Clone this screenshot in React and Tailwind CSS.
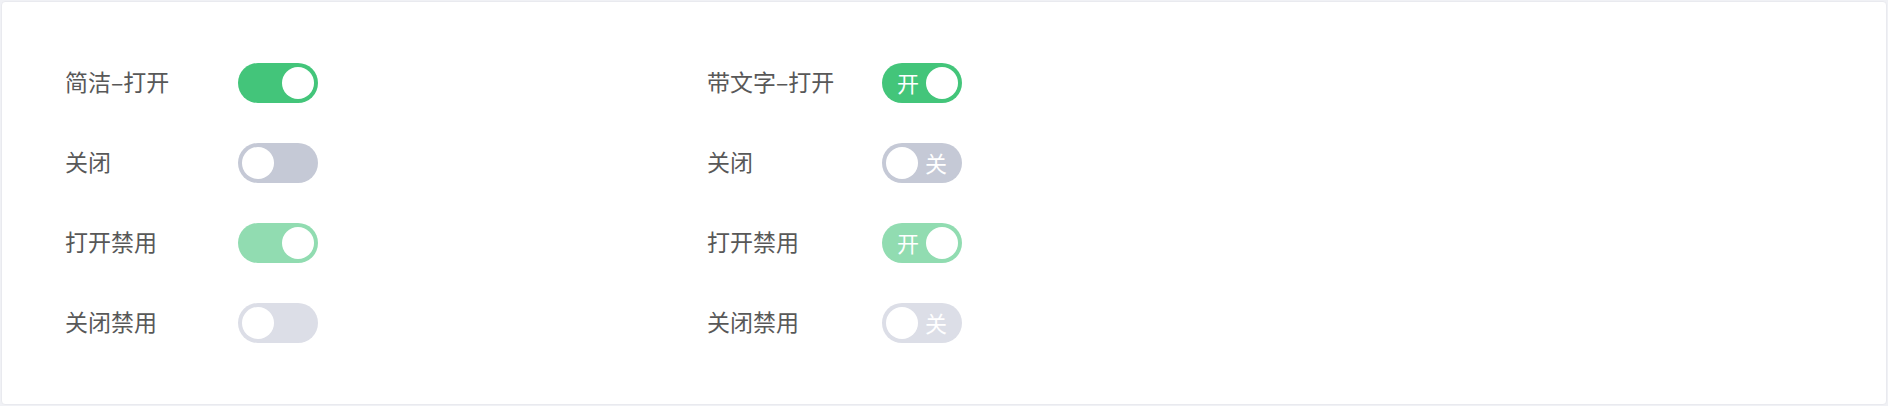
import React from 'react';

const rows = [
    { label: '简洁–打开', on: true, disabled: false },
    { label: '关闭', on: false, disabled: false },
    { label: '打开禁用', on: true, disabled: true },
    { label: '关闭禁用', on: false, disabled: true },
];

const textRows = [
    { label: '带文字–打开', on: true, disabled: false },
    { label: '关闭', on: false, disabled: false },
    { label: '打开禁用', on: true, disabled: true },
    { label: '关闭禁用', on: false, disabled: true },
];

function trackColor(on, disabled) {
    if (on) return disabled ? 'bg-[#91dcb1]' : 'bg-[#43c57a]';
    return disabled ? 'bg-[#dcdee7]' : 'bg-[#c5c9d6]';
}

function Switch({ on, disabled, withText }) {
    return (
        <div
            className={`w-[80px] h-[40px] rounded-full p-[4px] flex items-center ${on ? 'flex-row-reverse' : 'flex-row'} ${trackColor(on, disabled)}`}
        >
            <div className="w-[32px] h-[32px] rounded-full bg-white shrink-0" />
            {withText && (
                <span
                    className={`flex-1 text-white text-[22px] leading-none mb-[2px] ${on ? 'text-left pl-[11px]' : 'text-right pr-[11px]'}`}
                >
                    {on ? '开' : '关'}
                </span>
            )}
        </div>
    );
}

function Column({ items, withText, labelWidth }) {
    return (
        <div className="flex flex-col gap-[40px] w-[642px]">
            {items.map((item, idx) => (
                <div key={idx} className="flex items-center h-[40px]">
                    <span className={`${labelWidth} text-[23px] text-[#585858] leading-none mb-[3px]`}>{item.label}</span>
                    <Switch on={item.on} disabled={item.disabled} withText={withText} />
                </div>
            ))}
        </div>
    );
}

export default function App() {
    return (
        <div
            className="w-[1888px] h-[406px] bg-[#f0f1f5] p-[1px]"
            style={{ fontFamily: '"Noto Sans CJK SC", "Noto Sans", sans-serif' }}
        >
            <div className="h-full bg-white border border-[#e9eaef] rounded-[4px] pl-[63px] pt-[61px] flex">
                <Column items={rows} labelWidth="w-[173px]" />
                <Column items={textRows} labelWidth="w-[175px]" withText />
            </div>
        </div>
    );
}
